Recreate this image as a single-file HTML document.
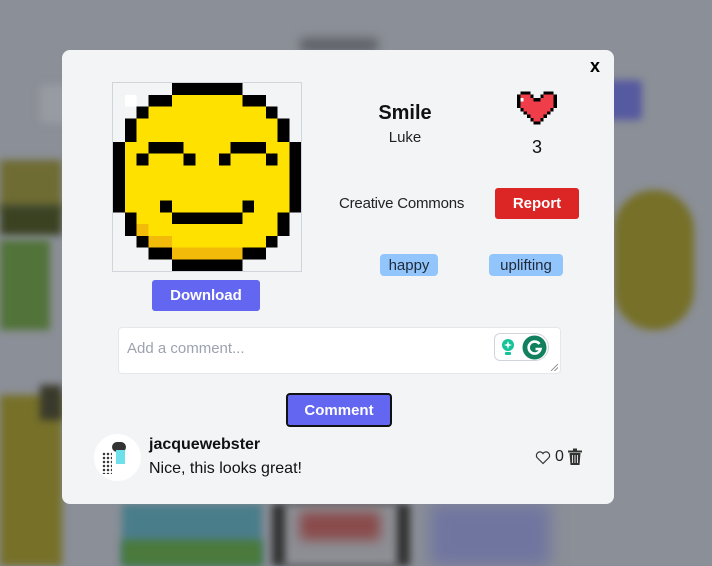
<!DOCTYPE html>
<html><head><meta charset="utf-8"><style>
*{margin:0;padding:0;box-sizing:border-box}
body{width:712px;height:566px;overflow:hidden;background:#8b8f97;font-family:"Liberation Sans","DejaVu Sans",sans-serif;position:relative}
.bg{position:absolute;filter:blur(4px)}
.modal{position:absolute;left:62px;top:50px;width:552px;height:454px;background:#f3f4f6;border-radius:8px}
.a{position:absolute}
.btn{position:absolute;color:#fff;font-weight:bold;font-size:15px;display:flex;align-items:center;justify-content:center;border-radius:3px}
.tag{position:absolute;background:#93c5fd;border-radius:4px;font-size:15px;color:#1f2937;display:flex;align-items:center;justify-content:center;height:22px;top:254px}
</style></head><body>
<div class="bg" style="left:300px;top:38px;width:78px;height:14px;background:#5f6268;border-radius:4px;filter:blur(5px)"></div>
<div class="bg" style="left:40px;top:85px;width:40px;height:38px;background:#979ba2;border-radius:4px"></div>
<div class="bg" style="left:600px;top:80px;width:42px;height:40px;background:#565aa0;border-radius:4px"></div>
<div class="bg" style="left:0;top:160px;width:62px;height:50px;background:#6f6c33"></div>
<div class="bg" style="left:0;top:205px;width:62px;height:30px;background:#3a4222"></div>
<div class="bg" style="left:0;top:240px;width:50px;height:90px;background:#52733a"></div>
<div class="bg" style="left:0;top:395px;width:62px;height:171px;background:#767028"></div>
<div class="bg" style="left:40px;top:385px;width:22px;height:35px;background:#3a3a2c"></div>
<div class="bg" style="left:614px;top:190px;width:80px;height:140px;background:#767028;border-radius:40px"></div>
<div class="bg" style="left:122px;top:504px;width:140px;height:62px;background:#4a7d8a"></div>
<div class="bg" style="left:122px;top:540px;width:140px;height:26px;background:#4b7a3c"></div>
<div class="bg" style="left:272px;top:504px;width:138px;height:62px;background:#333"></div>
<div class="bg" style="left:285px;top:504px;width:112px;height:62px;background:#8d8f95"></div>
<div class="bg" style="left:300px;top:512px;width:80px;height:28px;background:#8a4a4a;filter:blur(6px)"></div>
<div class="bg" style="left:430px;top:504px;width:120px;height:62px;background:#7075a0;filter:blur(8px)"></div>

<div class="modal">
  <div class="a" style="right:14px;top:6px;font-weight:bold;font-size:18px;color:#000">x</div>
</div>

<svg class="a" style="left:112px;top:82px;border:1px solid #d1d5db" width="190" height="190" viewBox="0 0 16 16" shape-rendering="crispEdges" id="px"></svg>

<div class="a" style="left:355px;top:102px;width:100px;text-align:center;font-weight:bold;font-size:20px;color:#111">Smile</div>
<div class="a" style="left:355px;top:129px;width:100px;text-align:center;font-size:15px;color:#222">Luke</div>

<svg class="a" style="left:517px;top:88px" width="40" height="40" viewBox="0 0 12 12" shape-rendering="crispEdges" id="ht"></svg>
<div class="a" style="left:527px;top:137px;width:20px;text-align:center;font-size:18px;color:#111">3</div>

<div class="a" style="left:339px;top:195px;font-size:15px;color:#222;letter-spacing:-0.2px">Creative Commons</div>
<div class="btn" style="left:495px;top:188px;width:84px;height:31px;background:#dc2626">Report</div>

<div class="tag" style="left:380px;width:58px">happy</div>
<div class="tag" style="left:489px;width:74px">uplifting</div>

<div class="btn" style="left:152px;top:280px;width:108px;height:31px;background:#6366f1">Download</div>

<div class="a" style="left:118px;top:327px;width:443px;height:47px;background:#fff;border:1px solid #e5e7eb;border-radius:4px">
  <div class="a" style="left:8px;top:12px;font-size:15px;color:#9ca3af">Add a comment...</div>
  <div class="a" style="left:375px;top:5px;width:55px;height:28px;border:1px solid #d1d5db;border-radius:6px 14px 14px 6px;background:#fff">
    <svg class="a" style="left:5px;top:4px" width="16" height="20" viewBox="0 0 16 20"><circle cx="8" cy="7" r="6" fill="#15c39a"/><path d="M8 3l1 3 3 1-3 1-1 3-1-3-3-1 3-1z" fill="#fff"/><rect x="5" y="14" width="6" height="3" rx="1" fill="#15c39a"/></svg>
    <svg class="a" style="left:27px;top:1px" width="25" height="25" viewBox="0 0 25 25"><circle cx="12.5" cy="12.5" r="12" fill="#11805f"/><path d="M17.5 9a6 6 0 1 0 1 5h-5" stroke="#fff" stroke-width="2.6" fill="none"/></svg>
  </div>
  <div class="a" style="right:2px;bottom:2px;width:7px;height:7px;background:linear-gradient(135deg,transparent 45%,#999 45%,#999 55%,transparent 55%,transparent 70%,#999 70%,#999 80%,transparent 80%)"></div>
</div>

<div class="btn" style="left:286px;top:393px;width:106px;height:34px;background:#6366f1;border:2px solid #111;border-radius:4px">Comment</div>

<div class="a" style="left:94px;top:434px;width:47px;height:47px;border-radius:50%;background:#fff;overflow:hidden">
  <div class="a" style="left:18px;top:8px;width:14px;height:10px;background:#333;border-radius:5px"></div>
  <div class="a" style="left:22px;top:16px;width:9px;height:14px;background:#6de0ea"></div>
  <div class="a" style="left:8px;top:18px;width:10px;height:22px;background:radial-gradient(#333 1px,transparent 1.5px) 0 0/4px 4px"></div>
</div>
<div class="a" style="left:149px;top:436px;font-weight:bold;font-size:16px;color:#111">jacquewebster</div>
<div class="a" style="left:149px;top:460px;font-size:16px;color:#111">Nice, this looks great!</div>
<svg class="a" style="left:535px;top:450px" width="16" height="15" viewBox="0 0 16 15"><path d="M8 13.5L2 7.5a3.3 3.3 0 0 1 6-4 3.3 3.3 0 0 1 6 4z" fill="none" stroke="#333" stroke-width="1.2"/></svg>
<div class="a" style="left:555px;top:448px;font-size:16px;color:#222">0</div>
<svg class="a" style="left:567px;top:448px" width="16" height="18" viewBox="0 0 16 18"><rect x="1" y="2.5" width="14" height="2" fill="#333"/><rect x="6" y="0.5" width="4" height="2" fill="#333"/><path d="M2.5 5h11l-1 12h-9z" fill="#333"/><path d="M5.5 7v8M8 7v8M10.5 7v8" stroke="#ddd" stroke-width="1"/></svg>

<script>
function draw(id,rows,c,w){var s="";rows.forEach(function(r,y){for(var x=0;x<r.length;x++){if(c[r[x]])s+='<rect x="'+x+'" y="'+y+'" width="1.02" height="1.02" fill="'+c[r[x]]+'"/>';}});document.getElementById(id).innerHTML=s;}
draw("px",[
".....BBBBBB.....",
".W.BBYYYYYYBB...",
"..BYYYYYYYYYYB..",
".BYYYYYYYYYYYYB.",
".BYYYYYYYYYYYYB.",
"BYYBBBYYYYBBBYYB",
"BYBYYYBYYBYYYBYB",
"BYYYYYYYYYYYYYYB",
"BYYYYYYYYYYYYYYB",
"BYYYYYYYYYYYYYYB",
"BYYYBYYYYYYBYYYB",
".BYYYBBBBBBYYYB.",
".BOYYYYYYYYYYYB.",
"..BOOYYYYYYYYB..",
"...BBOOOOOOBB...",
".....BBBBBB....."],{B:"#000",Y:"#ffe100",O:"#f2bb0a",W:"#fff",".":"#f3f4f6"});
draw("ht",[
"",
".BBB....BBB.",
"BRRRB..BRRRB",
"BWRRRBBRRRRB",
"BRRRRRRRRRRB",
"BRRRRRRRRRRB",
".BRRRRRRRRB.",
"..BRRRRRRB..",
"...BRRRRB...",
"....BRRB....",
".....BB.....",
""],{B:"#000",R:"#ef3e4a",W:"#fff"});
</script>
</body></html>
